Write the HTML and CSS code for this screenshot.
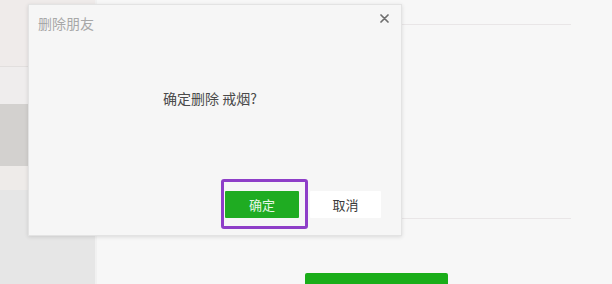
FILE: index.html
```html
<!DOCTYPE html>
<html lang="zh">
<head>
<meta charset="utf-8">
<link rel="stylesheet" href="styles.css">
</head>
<body>
<div class="app">
  <aside class="sidebar">
    <div class="item item-a"></div>
    <div class="item item-b"></div>
    <div class="item item-c"></div>
    <div class="item item-d"></div>
  </aside>
  <main class="main">
    <div class="profile">
      <div class="line line-top"></div>
      <div class="spacer"></div>
      <div class="line line-bottom"></div>
      <div class="actions">
        <button class="send">发消息</button>
      </div>
    </div>
  </main>
</div>

<div class="dialog">
  <div class="dialog-head">
    <span class="dialog-title">删除朋友</span>
    <span class="dialog-close">
      <svg width="9" height="9" viewBox="0 0 9 9"><path d="M1 1 L8 8 M8 1 L1 8" stroke="#6f6f6f" stroke-width="1.7" stroke-linecap="round"/></svg>
    </span>
  </div>
  <div class="dialog-body">确定删除 戒烟?</div>
  <div class="dialog-foot">
    <div class="highlight">
      <button class="btn btn-ok">确定</button>
    </div>
    <button class="btn btn-cancel">取消</button>
  </div>
</div>
</body>
</html>
```
FILE: styles.css
```css
* { box-sizing: border-box; margin: 0; padding: 0; }
html, body { width: 612px; height: 284px; overflow: hidden; }
body {
  background: #f7f7f7;
  font-family: "Noto Sans CJK SC", "Noto Sans", sans-serif;
  position: relative;
}
.app { display: flex; height: 284px; }
.sidebar {
  width: 95px;
  background: #e6e6e6;
  display: flex;
  flex-direction: column;
}
.item-a { height: 67px; background: #efebea; border-bottom: 1px solid #e2dfde; }
.item-b { height: 37px; background: #efeded; }
.item-c { height: 62px; background: #d3d1cf; }
.item-d { height: 24px; background: #eeebe9; }
.main {
  flex: 1;
  background: #f7f7f7;
  border-left: 2px solid #f1f1f1;
}
.profile {
  width: 474px;
  display: flex;
  flex-direction: column;
  padding-top: 24px;
}
.line { height: 1px; background: #e9e6e7; }
.spacer { height: 193px; }
.actions { display: flex; padding-top: 54px; padding-left: 208px; }
.send {
  width: 143px;
  height: 34px;
  background: #1aad19;
  border: none;
  border-radius: 2px;
  color: #fff;
  font-family: inherit;
  font-size: 14px;
  padding-top: 2px;
}

.dialog {
  position: absolute;
  left: 28px;
  top: 4px;
  width: 374px;
  height: 232px;
  background: #f6f6f6;
  border: 1px solid #e3e3e3;
  box-shadow: 0 1px 4px rgba(0,0,0,0.12);
  display: flex;
  flex-direction: column;
}
.dialog-head {
  display: flex;
  justify-content: space-between;
  align-items: center;
  padding: 5px 12px 0 9px;
  height: 30px;
}
.dialog-title { font-size: 14px; color: #a8a8a8; }
.dialog-close { display: flex; align-items: center; margin-top: -8px; }
.dialog-body {
  text-align: center;
  font-size: 14px;
  color: #4a4a4a;
  padding-top: 53px;
  height: 144px;
  padding-right: 10px;
}
.dialog-foot {
  display: flex;
  justify-content: flex-end;
  align-items: center;
  gap: 2px;
  padding-right: 20px;
}
.highlight {
  border: 3px solid #8e3ec8;
  border-radius: 3px;
  padding: 9px 6px 8px 1px;
}
.btn {
  height: 27px;
  border: none;
  font-family: inherit;
  font-size: 13px;
  border-radius: 1px;
}
.btn-ok { width: 74px; background: #1fac22; color: #e8f7e8; }
.btn-cancel { width: 71px; background: #ffffff; color: #3a3a3a; }
```
